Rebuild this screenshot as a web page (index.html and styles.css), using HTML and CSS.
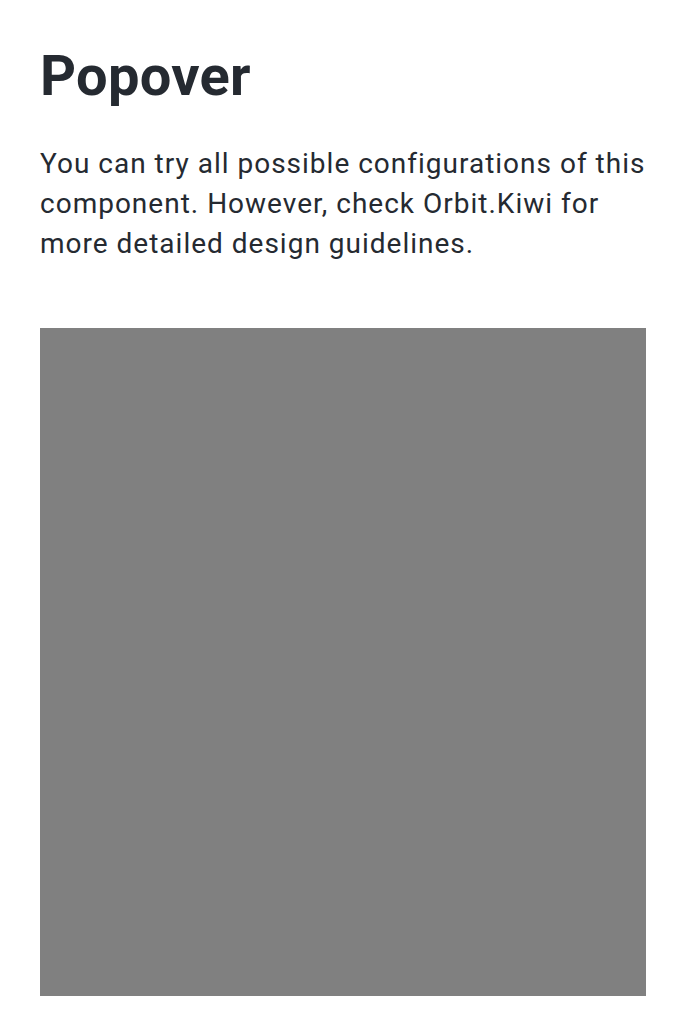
FILE: index.html
```html
<!DOCTYPE html>
<html>
<head>
<meta charset="utf-8">
<link rel="stylesheet" href="styles.css">
</head>
<body>
<main class="page">
  <h1 class="title">Popover</h1>
  <p class="intro">You can try all possible configurations of this component. However, check Orbit.Kiwi for more detailed design guidelines.</p>
  <div class="preview"></div>
</main>
</body>
</html>
```
FILE: styles.css
```css
html, body {
  margin: 0;
  padding: 0;
  background: #ffffff;
}
.page {
  padding: 40px 40px 0 40px;
  font-family: Roboto, "Noto Sans", sans-serif;
  color: #252a31;
}
.title {
  margin: 0;
  font-size: 56px;
  font-weight: 700;
  line-height: 72px;
  letter-spacing: 0.3px;
}
.intro {
  margin: 32px 0 0 0;
  font-size: 28px;
  line-height: 40px;
  font-weight: 400;
  letter-spacing: 1px;
}
.preview {
  margin-top: 64px;
  height: 668px;
  background: #808080;
}
```
